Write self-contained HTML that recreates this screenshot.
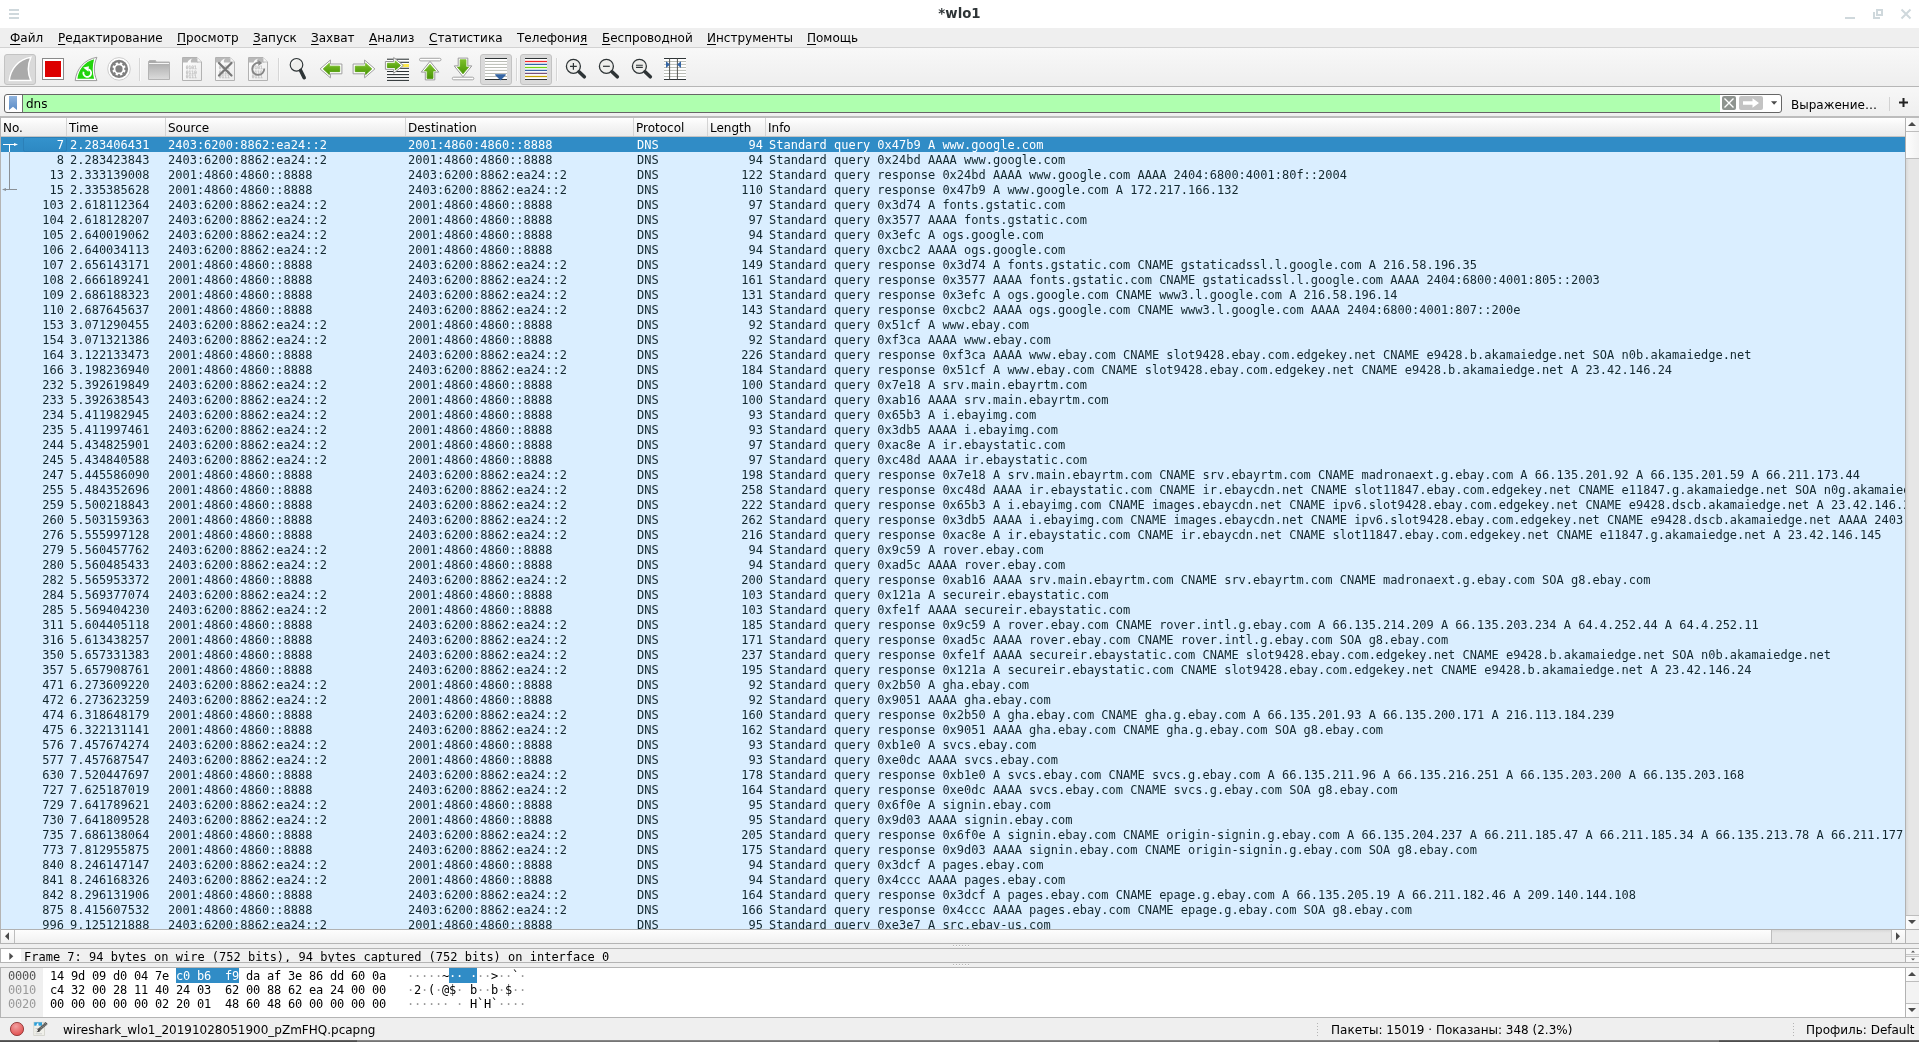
<!DOCTYPE html>
<html lang="ru"><head><meta charset="utf-8"><title>*wlo1</title>
<style>
*{box-sizing:border-box;margin:0;padding:0}
html,body{width:1919px;height:1042px;overflow:hidden;background:#efefef}
body{position:relative;will-change:transform;font-family:"DejaVu Sans","Liberation Sans",sans-serif;font-size:12px;color:#000}
.abs{position:absolute}
#title{position:absolute;left:0;top:0;width:1919px;height:28px;background:#fff}
#title .t{position:absolute;left:0;width:1919px;top:6px;text-align:center;font-weight:bold;font-size:13.33px;line-height:16px;color:#2e3436}
#menu{position:absolute;left:0;top:28px;width:1919px;height:20px;background:#efefef;border-bottom:1px solid #d2d2d2}
#menu span{position:absolute;top:2px;line-height:17px;white-space:nowrap}
#menu u{text-decoration:underline;text-underline-offset:2px;text-decoration-thickness:1px}
#toolbar{position:absolute;left:0;top:48px;width:1919px;height:39px;background:linear-gradient(#f8f8f8,#eeeeee);border-bottom:1px solid #b6b6b6}
#toolbar .pr{position:absolute;top:6px;width:32px;height:31px;border:1px solid #c3c3c3;border-radius:3px;background:#dadada}
#toolbar .sep{position:absolute;top:10px;width:1px;height:23px;background:#d6d6d6;border-right:1px solid #fafafa;box-sizing:content-box}
#toolbar svg{position:absolute;top:9px;width:24px;height:24px;overflow:visible}
#fbar{position:absolute;left:0;top:87px;width:1919px;height:29px;background:linear-gradient(#f7f7f7,#efefef)}
#finput{position:absolute;left:4px;top:7px;width:1778px;height:19px;border:1px solid #666;border-radius:3px;background:#fff;overflow:hidden}
#finput .g{position:absolute;left:17px;top:0;width:1698px;height:17px;background:#afffaf;border-left:1px solid #6e6e6e}
#finput .tx{position:absolute;left:21px;top:1px;line-height:17px;font-size:12px}
#list{position:absolute;left:0;top:116px;width:1919px;height:828px;border:1px solid #b4b4b4;border-right:0;border-top:2px solid #bcbcbc;background:#fff;overflow:hidden}
#hdr{position:absolute;left:0;top:0;width:1904px;height:19px;background:linear-gradient(#fff,#f6f6f6 40%,#ebebeb);border-bottom:1px solid #c4c4c4}
#hdr span{position:absolute;top:0;line-height:20px;height:18px;padding-left:2px;border-left:1px solid #d4d4d4}
#rows{position:absolute;left:0;top:19px;width:1904px;height:792px;overflow:hidden;background:#daeeff;font-family:"DejaVu Sans Mono","Liberation Mono",monospace;font-size:12px;color:#12272e}
.r{position:relative;height:15px;line-height:15px;white-space:pre}
.r b{font-weight:normal;position:absolute;top:1px}
.r .fc{position:absolute;left:22px;top:0;width:44px;height:15px;background:linear-gradient(#3492cc,#2d89c3);border:1px solid #2b80b8;border-radius:2px}
.sel{background:#308cc6;color:#fff}
.c0{left:0;width:63px;text-align:right}
.c1{left:69px}.c2{left:167px}.c3{left:407px}.c4{left:636px}
.c5{left:700px;width:62px;text-align:right}
.c6{left:768px}
#detail{position:absolute;left:0;top:948px;width:1919px;height:15px;border:1px solid #b4b4b4;border-right:0;background:#fff;overflow:hidden}
#hex{position:absolute;left:0;top:967px;width:1919px;height:51px;border:1px solid #b4b4b4;border-right:0;background:#fff;overflow:hidden}
#status{position:absolute;left:0;top:1018px;width:1919px;height:22px;background:#efefef}
#bottom{position:absolute;left:0;top:1040px;width:1919px;height:2px;background:linear-gradient(#6a6a6a,#444)}

.sb{position:absolute;background:#e5e5e5}
.sbtn{position:absolute;background:linear-gradient(90deg,#fdfdfd,#f1f1f1);border:0 solid #bdbdbd}
.sbh{background:linear-gradient(#fdfdfd,#f1f1f1)}
.ar{position:absolute}
.hx{position:absolute;margin-top:1px;font-family:"DejaVu Sans Mono","Liberation Mono",monospace;font-size:12px;line-height:14px;white-space:pre;color:#000}
.hx i{font-style:normal;display:inline-block;width:7px;text-align:center}
.hx .d{color:#989898}
.hx .hs,.hx .hs .d{color:#fff}
.hl{position:absolute;background:#308cc6;top:0;height:15px}
</style></head><body>
<div id="title"><svg class="abs" style="left:9px;top:9px" width="10" height="10"><path d="M0 1h10M0 5h10M0 9h10" stroke="#cfd8dc" stroke-width="2"/></svg><div class="t">*wlo1</div>
<svg class="abs" style="left:1840px;top:4px" width="76" height="20"><path d="M5 14h10" stroke="#cfd8dc" stroke-width="2" fill="none"/><path d="M37 6h5v5h-5z M34 8v6h6" stroke="#cfd8dc" stroke-width="2" fill="none"/><path d="M61.5 5.500l9 9m0-9l-9 9" stroke="#cfd8dc" stroke-width="2" fill="none"/></svg></div>
<div id="menu"><span style="left:10px"><u>Ф</u>айл</span><span style="left:58px"><u>Р</u>едактирование</span><span style="left:177px"><u>П</u>росмотр</span><span style="left:253px"><u>З</u>апуск</span><span style="left:311px"><u>З</u>ахват</span><span style="left:369px"><u>А</u>нализ</span><span style="left:429px"><u>С</u>татистика</span><span style="left:517px">Телефони<u>я</u></span><span style="left:602px"><u>Б</u>еспроводной</span><span style="left:707px"><u>И</u>нструменты</span><span style="left:807px"><u>П</u>омощь</span></div>
<div id="toolbar"><svg style="left:0;top:0;width:0;height:0"><defs>
<linearGradient id="gg" x1="0" y1="0" x2="0" y2="1"><stop offset="0" stop-color="#7cc02b"/><stop offset="1" stop-color="#4a9605"/></linearGradient>
<linearGradient id="fg" x1="0" y1="0" x2="0" y2="1"><stop offset="0" stop-color="#a6a6a6"/><stop offset="1" stop-color="#dcdcdc"/></linearGradient>
<linearGradient id="pg" x1="0" y1="0" x2="1" y2="1"><stop offset="0" stop-color="#fff"/><stop offset="1" stop-color="#ececec"/></linearGradient>
<g id="page"><path d="M2.500.5h14.500l4.500 4.500v18.500h-19z" fill="url(#pg)" stroke="#b2b2b2"/><path d="M3 1h13.500l2 4.500h-7.500c-.5-1.500 0-3 1.500-4-2.500.5-4.500 2-5 4h-4.500z" fill="#b9b9b9"/><path d="M17 .5v4.500h4.500" fill="#f6f6f6" stroke="#b2b2b2" stroke-width=".8"/><g font-family="DejaVu Sans Mono,Liberation Mono,monospace" font-size="4.600" fill="#c6c6c6" stroke="#c6c6c6" stroke-width=".3"><text x="5.700" y="12">0101</text><text x="5.700" y="16.800">0110</text><text x="5.700" y="21.400">0111</text></g></g>
<g id="mag"><circle cx="9.400" cy="9.300" r="7" fill="#eeeeec" stroke="#2e3436" stroke-width="1.300"/><path d="M15 14.800l5.300 5" stroke="#2e3436" stroke-width="3.600" stroke-linecap="round"/></g>
</defs></svg><div class="pr" style="left:4px"></div><div class="pr" style="left:480px"></div><div class="pr" style="left:520px"></div><div class="sep" style="left:139px"></div><div class="sep" style="left:278px"></div><div class="sep" style="left:516px"></div><div class="sep" style="left:556px"></div><svg style="left:8px" viewBox="0 0 24 24"><path d="M1.200 23.600C2.500 12 10 2.500 22.900.3C19.500 8 19.500 16 22.900 23.600z" fill="#aaa" stroke="#d4d4d4" stroke-width="2.400" stroke-linejoin="round"/><path d="M1.200 23.600C2.500 12 10 2.500 22.900.3C19.500 8 19.500 16 22.900 23.600z" fill="#aaa" stroke="#fff" stroke-width="1.500" stroke-linejoin="miter"/></svg><svg style="left:41px" viewBox="0 0 24 24"><rect x="1.500" y="1.500" width="21" height="21" fill="#fff" stroke="#8a8a8a"/><rect x="4" y="4" width="16" height="16" fill="#dc0000"/></svg><svg style="left:74px" viewBox="0 0 24 24"><path d="M1.200 23.600C2.500 12 10 2.500 22.900.3C19.500 8 19.500 16 22.900 23.600z" fill="#fff" stroke="#9a9a9a" stroke-width="1" stroke-linejoin="round"/><path d="M3.400 21.700C4.500 12.500 10.500 4.800 20.100 2.200C18.300 8.500 18.300 15.500 20.100 21.700z" fill="#22d40c"/><path d="M14.300 12.300A3.900 3.900 0 1 1 9.600 14.700" stroke="#fff" stroke-width="1.800" fill="none"/><path d="M9.200 10.600L14.900 9.300L14.400 14.800z" fill="#fff"/></svg><svg style="left:107px" viewBox="0 0 24 24"><circle cx="12" cy="11.900" r="11.300" fill="#fff" stroke="#c6c6c6" stroke-width=".9"/><circle cx="12" cy="11.900" r="9.100" fill="#7f7f7f"/><g transform="translate(12 11.900) rotate(22.500)"><circle r="5.300" fill="#fff"/><rect x="-1.200" y="-6.700" width="2.400" height="2.400" rx=".4" transform="rotate(0)" fill="#fff"/><rect x="-1.200" y="-6.700" width="2.400" height="2.400" rx=".4" transform="rotate(45)" fill="#fff"/><rect x="-1.200" y="-6.700" width="2.400" height="2.400" rx=".4" transform="rotate(90)" fill="#fff"/><rect x="-1.200" y="-6.700" width="2.400" height="2.400" rx=".4" transform="rotate(135)" fill="#fff"/><rect x="-1.200" y="-6.700" width="2.400" height="2.400" rx=".4" transform="rotate(180)" fill="#fff"/><rect x="-1.200" y="-6.700" width="2.400" height="2.400" rx=".4" transform="rotate(225)" fill="#fff"/><rect x="-1.200" y="-6.700" width="2.400" height="2.400" rx=".4" transform="rotate(270)" fill="#fff"/><rect x="-1.200" y="-6.700" width="2.400" height="2.400" rx=".4" transform="rotate(315)" fill="#fff"/></g><circle cx="12" cy="11.900" r="3.600" fill="#7f7f7f"/></svg><svg style="left:147px" viewBox="0 0 24 24"><path d="M2.500 3.500h6l.8 1.500h13.200v17.500h-21v-18z" fill="url(#fg)" stroke="#b4b4b4"/><path d="M2 6.500h20" stroke="#f4f4f4" stroke-width="1"/></svg><svg style="left:180px" viewBox="0 0 24 24"><use href="#page" x="0"/></svg><svg style="left:213px" viewBox="0 0 24 24"><use href="#page"/><path d="M6 6l12.500 12.500m0-12.500l-12.500 12.500" stroke="#777" stroke-width="2.200" stroke-linecap="round"/></svg><svg style="left:246px" viewBox="0 0 24 24"><use href="#page"/><path d="M12.800 6A6 6 0 1 0 18.200 11.500" stroke="#858585" stroke-width="1.800" fill="none"/><path d="M12.300 3.200l4 2.800-3.900 2.700z" fill="#858585"/></svg><svg style="left:286px" viewBox="0 0 24 24"><circle cx="10.500" cy="7.800" r="6.300" fill="#eeeeec" stroke="#2e3436" stroke-width="1.150"/><path d="M6.300 6.500a4.500 4.500 0 0 1 3.500-3.200" stroke="#fff" stroke-width="1" fill="none"/><path d="M14.600 13.500l3.600 7.200" stroke="#2e3436" stroke-width="3.600" stroke-linecap="round"/></svg><svg style="left:319px" viewBox="0 0 24 24"><g transform=""><path d="M1.100 11.900L11.400 3V7H22.900V16.800H11.400V20.800Z" fill="#fff" stroke="#9e9e9e" stroke-width="1" stroke-linejoin="round"/><path d="M4.300 11.900L10.300 6.300V9.200H20.700V14.600H10.300V17.500Z" fill="url(#gg)" stroke="url(#gg)" stroke-width="1"/></g></svg><svg style="left:352px" viewBox="0 0 24 24"><g transform="translate(24 0) scale(-1 1)"><path d="M1.100 11.900L11.400 3V7H22.900V16.800H11.400V20.800Z" fill="#fff" stroke="#9e9e9e" stroke-width="1" stroke-linejoin="round"/><path d="M4.300 11.900L10.300 6.300V9.200H20.700V14.600H10.300V17.500Z" fill="url(#gg)" stroke="url(#gg)" stroke-width="1"/></g></svg><svg style="left:385px" viewBox="0 0 24 24"><rect x="2" y="1" width="22" height="23" fill="#fff"/><rect x="17" y="7" width="7" height="3" fill="#fce94f"/><path d="M2 2.2h22" stroke="#2e3436" stroke-width="1.100"/><path d="M2 5.3h22" stroke="#2e3436" stroke-width="1.100"/><path d="M2 11.3h22" stroke="#2e3436" stroke-width="1.100"/><path d="M2 14.5h22" stroke="#2e3436" stroke-width="1.100"/><path d="M2 17.6h22" stroke="#2e3436" stroke-width="1.100"/><path d="M2 20.5h22" stroke="#2e3436" stroke-width="1.100"/><path d="M2 23.4h22" stroke="#2e3436" stroke-width="1.100"/><path d="M18.300 8.400L8.700.5v4H.4v7.800h8.300v4z" fill="#fff" stroke="#969696" stroke-width="1" stroke-linejoin="round"/><path d="M15.500 8.400L10.300 4v2.300H2.400v4.200h7.900v2.300z" fill="url(#gg)" stroke="url(#gg)" stroke-width="1"/></svg><svg style="left:418px" viewBox="0 0 24 24"><rect x="1.500" y="1.300" width="21.500" height="2.600" rx="1.300" fill="#fff" stroke="#9a9a9a" stroke-width=".9"/><path d="M12 4.300l8.800 10.800h-4v7.800H7.300v-7.800h-4z" fill="#fff" stroke="#9a9a9a" stroke-width="1" stroke-linejoin="round"/><path d="M12 7.300l5.600 6.600h-2.600v7.500H9.100v-7.500H6.400z" fill="url(#gg)" stroke="url(#gg)" stroke-width=".8"/></svg><svg style="left:451px" viewBox="0 0 24 24"><rect x="1.300" y="20.200" width="21.500" height="2.600" rx="1.300" fill="#fff" stroke="#9a9a9a" stroke-width=".9"/><path d="M12 19.800L3.200 8.900h4V1.100h9.600v7.800h4z" fill="#fff" stroke="#9a9a9a" stroke-width="1" stroke-linejoin="round"/><path d="M12 16.800L6.400 10.100h2.700V2.700h5.900v7.400h2.600z" fill="url(#gg)" stroke="url(#gg)" stroke-width=".8"/></svg><svg style="left:484px" viewBox="0 0 24 24"><rect x="1" y="1" width="22" height="22" fill="#fff"/><path d="M1 4.5h22" stroke="#babdb6" stroke-width="1"/><path d="M1 7.4h22" stroke="#babdb6" stroke-width="1"/><path d="M1 10.5h22" stroke="#babdb6" stroke-width="1"/><path d="M1 13.4h22" stroke="#babdb6" stroke-width="1"/><path d="M1 16.5h22" stroke="#babdb6" stroke-width="1"/><path d="M1 19.5h22" stroke="#babdb6" stroke-width="1"/><path d="M1 1.500h22M1 22.500h22" stroke="#2e3436" stroke-width="1.200"/><path d="M11.700 17.800h9.600l-4.800 4.900z" fill="#3465a4" stroke="#3465a4" stroke-width="1.200" stroke-linejoin="round"/></svg><svg style="left:524px" viewBox="0 0 24 24"><rect x="1" y="1" width="22" height="22" fill="#fff"/><path d="M1 4.5h22" stroke="#ef2929" stroke-width="1.300"/><path d="M1 7.4h22" stroke="#3465a4" stroke-width="1.300"/><path d="M1 10.5h22" stroke="#73d216" stroke-width="1.300"/><path d="M1 13.4h22" stroke="#3465a4" stroke-width="1.300"/><path d="M1 16.4h22" stroke="#75507b" stroke-width="1.300"/><path d="M1 19.5h22" stroke="#c4a000" stroke-width="1.300"/><path d="M1 1.500h22M1 22.500h22" stroke="#2e3436" stroke-width="1.200"/></svg><svg style="left:564px" viewBox="0 0 24 24"><use href="#mag"/><path d="M6 9.300h6.800M9.400 5.900v6.800" stroke="#2e3436" stroke-width="1.200"/></svg><svg style="left:597px" viewBox="0 0 24 24"><use href="#mag"/><path d="M6 9.300h6.800" stroke="#2e3436" stroke-width="1.200"/></svg><svg style="left:630px" viewBox="0 0 24 24"><use href="#mag"/><path d="M6 8.200h6.800M6 10.400h6.800" stroke="#2e3436" stroke-width="1.100"/></svg><svg style="left:663px" viewBox="0 0 24 24"><rect x="1" y="1" width="22" height="22" fill="#fff"/><path d="M1 4.5h22" stroke="#babdb6" stroke-width="1"/><path d="M1 7.4h22" stroke="#babdb6" stroke-width="1"/><path d="M1 10.5h22" stroke="#babdb6" stroke-width="1"/><path d="M1 13.4h22" stroke="#babdb6" stroke-width="1"/><path d="M1 16.5h22" stroke="#babdb6" stroke-width="1"/><path d="M1 19.5h22" stroke="#babdb6" stroke-width="1"/><path d="M1 1.500h22M1 22.500h22" stroke="#2e3436" stroke-width="1.200"/><path d="M6.600 1.500v21M14.400 1.500v21" stroke="#555753" stroke-width="1"/><path d="M3 4.200l4 3.400-4 3.400zM18 4.200l-4 3.400 4 3.400z" fill="#3465a4"/></svg></div>
<div id="fbar"><div id="finput"><div class="g"></div>
<svg class="abs" style="left:4px;top:1px" width="9" height="14"><defs><linearGradient id="bk" x1="0" y1="0" x2="0" y2="1"><stop offset="0" stop-color="#8fb3de"/><stop offset="1" stop-color="#5b8cc6"/></linearGradient></defs><path d="M0 0h8v14l-4-3.300-4 3.300z" fill="url(#bk)"/></svg>
<div class="tx">dns</div>
<svg class="abs" style="left:1717px;top:1px" width="60" height="16"><rect x="0" y="0" width="14" height="14" rx="2" fill="#8e938f"/><path d="M2.500 2.500l9 9m0-9l-9 9" stroke="#fff" stroke-width="1.400"/><rect x="17" y="0" width="24" height="14" rx="2" fill="#c3c3c3"/><path d="M21 5.200h9.500V2.300l6.500 4.700-6.500 4.700V8.800H21z" fill="#fff"/><path d="M49 5.300h6.200l-3.100 3.400z" fill="#4a4a4a"/></svg>
</div>
<div class="abs" style="left:1791px;top:10px;line-height:17px">Выражение…</div>
<div class="abs" style="left:1889px;top:10px;width:1px;height:14px;background:#d2d2d2"></div>
<svg class="abs" style="left:1899px;top:11px" width="10" height="10"><path d="M0 4.500h9M4.500 0v9" stroke="#222" stroke-width="2"/></svg>
</div>
<div id="list"><div id="hdr"><span style="left:0px;border-left:0;padding-left:2px">No.</span><span style="left:65px">Time</span><span style="left:164px">Source</span><span style="left:404px">Destination</span><span style="left:632px">Protocol</span><span style="left:706px">Length</span><span style="left:764px">Info</span></div><div id="rows">
<div class="r sel"><i class="fc"></i><b class="c0">7</b><b class="c1">2.283406431</b><b class="c2">2403:6200:8862:ea24::2</b><b class="c3">2001:4860:4860::8888</b><b class="c4">DNS</b><b class="c5">94</b><b class="c6">Standard query 0x47b9 A www.google.com</b></div>
<div class="r"><b class="c0">8</b><b class="c1">2.283423843</b><b class="c2">2403:6200:8862:ea24::2</b><b class="c3">2001:4860:4860::8888</b><b class="c4">DNS</b><b class="c5">94</b><b class="c6">Standard query 0x24bd AAAA www.google.com</b></div>
<div class="r"><b class="c0">13</b><b class="c1">2.333139008</b><b class="c2">2001:4860:4860::8888</b><b class="c3">2403:6200:8862:ea24::2</b><b class="c4">DNS</b><b class="c5">122</b><b class="c6">Standard query response 0x24bd AAAA www.google.com AAAA 2404:6800:4001:80f::2004</b></div>
<div class="r"><b class="c0">15</b><b class="c1">2.335385628</b><b class="c2">2001:4860:4860::8888</b><b class="c3">2403:6200:8862:ea24::2</b><b class="c4">DNS</b><b class="c5">110</b><b class="c6">Standard query response 0x47b9 A www.google.com A 172.217.166.132</b></div>
<div class="r"><b class="c0">103</b><b class="c1">2.618112364</b><b class="c2">2403:6200:8862:ea24::2</b><b class="c3">2001:4860:4860::8888</b><b class="c4">DNS</b><b class="c5">97</b><b class="c6">Standard query 0x3d74 A fonts.gstatic.com</b></div>
<div class="r"><b class="c0">104</b><b class="c1">2.618128207</b><b class="c2">2403:6200:8862:ea24::2</b><b class="c3">2001:4860:4860::8888</b><b class="c4">DNS</b><b class="c5">97</b><b class="c6">Standard query 0x3577 AAAA fonts.gstatic.com</b></div>
<div class="r"><b class="c0">105</b><b class="c1">2.640019062</b><b class="c2">2403:6200:8862:ea24::2</b><b class="c3">2001:4860:4860::8888</b><b class="c4">DNS</b><b class="c5">94</b><b class="c6">Standard query 0x3efc A ogs.google.com</b></div>
<div class="r"><b class="c0">106</b><b class="c1">2.640034113</b><b class="c2">2403:6200:8862:ea24::2</b><b class="c3">2001:4860:4860::8888</b><b class="c4">DNS</b><b class="c5">94</b><b class="c6">Standard query 0xcbc2 AAAA ogs.google.com</b></div>
<div class="r"><b class="c0">107</b><b class="c1">2.656143171</b><b class="c2">2001:4860:4860::8888</b><b class="c3">2403:6200:8862:ea24::2</b><b class="c4">DNS</b><b class="c5">149</b><b class="c6">Standard query response 0x3d74 A fonts.gstatic.com CNAME gstaticadssl.l.google.com A 216.58.196.35</b></div>
<div class="r"><b class="c0">108</b><b class="c1">2.666189241</b><b class="c2">2001:4860:4860::8888</b><b class="c3">2403:6200:8862:ea24::2</b><b class="c4">DNS</b><b class="c5">161</b><b class="c6">Standard query response 0x3577 AAAA fonts.gstatic.com CNAME gstaticadssl.l.google.com AAAA 2404:6800:4001:805::2003</b></div>
<div class="r"><b class="c0">109</b><b class="c1">2.686188323</b><b class="c2">2001:4860:4860::8888</b><b class="c3">2403:6200:8862:ea24::2</b><b class="c4">DNS</b><b class="c5">131</b><b class="c6">Standard query response 0x3efc A ogs.google.com CNAME www3.l.google.com A 216.58.196.14</b></div>
<div class="r"><b class="c0">110</b><b class="c1">2.687645637</b><b class="c2">2001:4860:4860::8888</b><b class="c3">2403:6200:8862:ea24::2</b><b class="c4">DNS</b><b class="c5">143</b><b class="c6">Standard query response 0xcbc2 AAAA ogs.google.com CNAME www3.l.google.com AAAA 2404:6800:4001:807::200e</b></div>
<div class="r"><b class="c0">153</b><b class="c1">3.071290455</b><b class="c2">2403:6200:8862:ea24::2</b><b class="c3">2001:4860:4860::8888</b><b class="c4">DNS</b><b class="c5">92</b><b class="c6">Standard query 0x51cf A www.ebay.com</b></div>
<div class="r"><b class="c0">154</b><b class="c1">3.071321386</b><b class="c2">2403:6200:8862:ea24::2</b><b class="c3">2001:4860:4860::8888</b><b class="c4">DNS</b><b class="c5">92</b><b class="c6">Standard query 0xf3ca AAAA www.ebay.com</b></div>
<div class="r"><b class="c0">164</b><b class="c1">3.122133473</b><b class="c2">2001:4860:4860::8888</b><b class="c3">2403:6200:8862:ea24::2</b><b class="c4">DNS</b><b class="c5">226</b><b class="c6">Standard query response 0xf3ca AAAA www.ebay.com CNAME slot9428.ebay.com.edgekey.net CNAME e9428.b.akamaiedge.net SOA n0b.akamaiedge.net</b></div>
<div class="r"><b class="c0">166</b><b class="c1">3.198236940</b><b class="c2">2001:4860:4860::8888</b><b class="c3">2403:6200:8862:ea24::2</b><b class="c4">DNS</b><b class="c5">184</b><b class="c6">Standard query response 0x51cf A www.ebay.com CNAME slot9428.ebay.com.edgekey.net CNAME e9428.b.akamaiedge.net A 23.42.146.24</b></div>
<div class="r"><b class="c0">232</b><b class="c1">5.392619849</b><b class="c2">2403:6200:8862:ea24::2</b><b class="c3">2001:4860:4860::8888</b><b class="c4">DNS</b><b class="c5">100</b><b class="c6">Standard query 0x7e18 A srv.main.ebayrtm.com</b></div>
<div class="r"><b class="c0">233</b><b class="c1">5.392638543</b><b class="c2">2403:6200:8862:ea24::2</b><b class="c3">2001:4860:4860::8888</b><b class="c4">DNS</b><b class="c5">100</b><b class="c6">Standard query 0xab16 AAAA srv.main.ebayrtm.com</b></div>
<div class="r"><b class="c0">234</b><b class="c1">5.411982945</b><b class="c2">2403:6200:8862:ea24::2</b><b class="c3">2001:4860:4860::8888</b><b class="c4">DNS</b><b class="c5">93</b><b class="c6">Standard query 0x65b3 A i.ebayimg.com</b></div>
<div class="r"><b class="c0">235</b><b class="c1">5.411997461</b><b class="c2">2403:6200:8862:ea24::2</b><b class="c3">2001:4860:4860::8888</b><b class="c4">DNS</b><b class="c5">93</b><b class="c6">Standard query 0x3db5 AAAA i.ebayimg.com</b></div>
<div class="r"><b class="c0">244</b><b class="c1">5.434825901</b><b class="c2">2403:6200:8862:ea24::2</b><b class="c3">2001:4860:4860::8888</b><b class="c4">DNS</b><b class="c5">97</b><b class="c6">Standard query 0xac8e A ir.ebaystatic.com</b></div>
<div class="r"><b class="c0">245</b><b class="c1">5.434840588</b><b class="c2">2403:6200:8862:ea24::2</b><b class="c3">2001:4860:4860::8888</b><b class="c4">DNS</b><b class="c5">97</b><b class="c6">Standard query 0xc48d AAAA ir.ebaystatic.com</b></div>
<div class="r"><b class="c0">247</b><b class="c1">5.445586090</b><b class="c2">2001:4860:4860::8888</b><b class="c3">2403:6200:8862:ea24::2</b><b class="c4">DNS</b><b class="c5">198</b><b class="c6">Standard query response 0x7e18 A srv.main.ebayrtm.com CNAME srv.ebayrtm.com CNAME madronaext.g.ebay.com A 66.135.201.92 A 66.135.201.59 A 66.211.173.44</b></div>
<div class="r"><b class="c0">255</b><b class="c1">5.484352696</b><b class="c2">2001:4860:4860::8888</b><b class="c3">2403:6200:8862:ea24::2</b><b class="c4">DNS</b><b class="c5">258</b><b class="c6">Standard query response 0xc48d AAAA ir.ebaystatic.com CNAME ir.ebaycdn.net CNAME slot11847.ebay.com.edgekey.net CNAME e11847.g.akamaiedge.net SOA n0g.akamaiedge.net</b></div>
<div class="r"><b class="c0">259</b><b class="c1">5.500218843</b><b class="c2">2001:4860:4860::8888</b><b class="c3">2403:6200:8862:ea24::2</b><b class="c4">DNS</b><b class="c5">222</b><b class="c6">Standard query response 0x65b3 A i.ebayimg.com CNAME images.ebaycdn.net CNAME ipv6.slot9428.ebay.com.edgekey.net CNAME e9428.dscb.akamaiedge.net A 23.42.146.24</b></div>
<div class="r"><b class="c0">260</b><b class="c1">5.503159363</b><b class="c2">2001:4860:4860::8888</b><b class="c3">2403:6200:8862:ea24::2</b><b class="c4">DNS</b><b class="c5">262</b><b class="c6">Standard query response 0x3db5 AAAA i.ebayimg.com CNAME images.ebaycdn.net CNAME ipv6.slot9428.ebay.com.edgekey.net CNAME e9428.dscb.akamaiedge.net AAAA 2403:6200:ffff:ffa1::3ace:dcb1</b></div>
<div class="r"><b class="c0">276</b><b class="c1">5.555997128</b><b class="c2">2001:4860:4860::8888</b><b class="c3">2403:6200:8862:ea24::2</b><b class="c4">DNS</b><b class="c5">216</b><b class="c6">Standard query response 0xac8e A ir.ebaystatic.com CNAME ir.ebaycdn.net CNAME slot11847.ebay.com.edgekey.net CNAME e11847.g.akamaiedge.net A 23.42.146.145</b></div>
<div class="r"><b class="c0">279</b><b class="c1">5.560457762</b><b class="c2">2403:6200:8862:ea24::2</b><b class="c3">2001:4860:4860::8888</b><b class="c4">DNS</b><b class="c5">94</b><b class="c6">Standard query 0x9c59 A rover.ebay.com</b></div>
<div class="r"><b class="c0">280</b><b class="c1">5.560485433</b><b class="c2">2403:6200:8862:ea24::2</b><b class="c3">2001:4860:4860::8888</b><b class="c4">DNS</b><b class="c5">94</b><b class="c6">Standard query 0xad5c AAAA rover.ebay.com</b></div>
<div class="r"><b class="c0">282</b><b class="c1">5.565953372</b><b class="c2">2001:4860:4860::8888</b><b class="c3">2403:6200:8862:ea24::2</b><b class="c4">DNS</b><b class="c5">200</b><b class="c6">Standard query response 0xab16 AAAA srv.main.ebayrtm.com CNAME srv.ebayrtm.com CNAME madronaext.g.ebay.com SOA g8.ebay.com</b></div>
<div class="r"><b class="c0">284</b><b class="c1">5.569377074</b><b class="c2">2403:6200:8862:ea24::2</b><b class="c3">2001:4860:4860::8888</b><b class="c4">DNS</b><b class="c5">103</b><b class="c6">Standard query 0x121a A secureir.ebaystatic.com</b></div>
<div class="r"><b class="c0">285</b><b class="c1">5.569404230</b><b class="c2">2403:6200:8862:ea24::2</b><b class="c3">2001:4860:4860::8888</b><b class="c4">DNS</b><b class="c5">103</b><b class="c6">Standard query 0xfe1f AAAA secureir.ebaystatic.com</b></div>
<div class="r"><b class="c0">311</b><b class="c1">5.604405118</b><b class="c2">2001:4860:4860::8888</b><b class="c3">2403:6200:8862:ea24::2</b><b class="c4">DNS</b><b class="c5">185</b><b class="c6">Standard query response 0x9c59 A rover.ebay.com CNAME rover.intl.g.ebay.com A 66.135.214.209 A 66.135.203.234 A 64.4.252.44 A 64.4.252.11</b></div>
<div class="r"><b class="c0">316</b><b class="c1">5.613438257</b><b class="c2">2001:4860:4860::8888</b><b class="c3">2403:6200:8862:ea24::2</b><b class="c4">DNS</b><b class="c5">171</b><b class="c6">Standard query response 0xad5c AAAA rover.ebay.com CNAME rover.intl.g.ebay.com SOA g8.ebay.com</b></div>
<div class="r"><b class="c0">350</b><b class="c1">5.657331383</b><b class="c2">2001:4860:4860::8888</b><b class="c3">2403:6200:8862:ea24::2</b><b class="c4">DNS</b><b class="c5">237</b><b class="c6">Standard query response 0xfe1f AAAA secureir.ebaystatic.com CNAME slot9428.ebay.com.edgekey.net CNAME e9428.b.akamaiedge.net SOA n0b.akamaiedge.net</b></div>
<div class="r"><b class="c0">357</b><b class="c1">5.657908761</b><b class="c2">2001:4860:4860::8888</b><b class="c3">2403:6200:8862:ea24::2</b><b class="c4">DNS</b><b class="c5">195</b><b class="c6">Standard query response 0x121a A secureir.ebaystatic.com CNAME slot9428.ebay.com.edgekey.net CNAME e9428.b.akamaiedge.net A 23.42.146.24</b></div>
<div class="r"><b class="c0">471</b><b class="c1">6.273609220</b><b class="c2">2403:6200:8862:ea24::2</b><b class="c3">2001:4860:4860::8888</b><b class="c4">DNS</b><b class="c5">92</b><b class="c6">Standard query 0x2b50 A gha.ebay.com</b></div>
<div class="r"><b class="c0">472</b><b class="c1">6.273623259</b><b class="c2">2403:6200:8862:ea24::2</b><b class="c3">2001:4860:4860::8888</b><b class="c4">DNS</b><b class="c5">92</b><b class="c6">Standard query 0x9051 AAAA gha.ebay.com</b></div>
<div class="r"><b class="c0">474</b><b class="c1">6.318648179</b><b class="c2">2001:4860:4860::8888</b><b class="c3">2403:6200:8862:ea24::2</b><b class="c4">DNS</b><b class="c5">160</b><b class="c6">Standard query response 0x2b50 A gha.ebay.com CNAME gha.g.ebay.com A 66.135.201.93 A 66.135.200.171 A 216.113.184.239</b></div>
<div class="r"><b class="c0">475</b><b class="c1">6.322131141</b><b class="c2">2001:4860:4860::8888</b><b class="c3">2403:6200:8862:ea24::2</b><b class="c4">DNS</b><b class="c5">162</b><b class="c6">Standard query response 0x9051 AAAA gha.ebay.com CNAME gha.g.ebay.com SOA g8.ebay.com</b></div>
<div class="r"><b class="c0">576</b><b class="c1">7.457674274</b><b class="c2">2403:6200:8862:ea24::2</b><b class="c3">2001:4860:4860::8888</b><b class="c4">DNS</b><b class="c5">93</b><b class="c6">Standard query 0xb1e0 A svcs.ebay.com</b></div>
<div class="r"><b class="c0">577</b><b class="c1">7.457687547</b><b class="c2">2403:6200:8862:ea24::2</b><b class="c3">2001:4860:4860::8888</b><b class="c4">DNS</b><b class="c5">93</b><b class="c6">Standard query 0xe0dc AAAA svcs.ebay.com</b></div>
<div class="r"><b class="c0">630</b><b class="c1">7.520447697</b><b class="c2">2001:4860:4860::8888</b><b class="c3">2403:6200:8862:ea24::2</b><b class="c4">DNS</b><b class="c5">178</b><b class="c6">Standard query response 0xb1e0 A svcs.ebay.com CNAME svcs.g.ebay.com A 66.135.211.96 A 66.135.216.251 A 66.135.203.200 A 66.135.203.168</b></div>
<div class="r"><b class="c0">727</b><b class="c1">7.625187019</b><b class="c2">2001:4860:4860::8888</b><b class="c3">2403:6200:8862:ea24::2</b><b class="c4">DNS</b><b class="c5">164</b><b class="c6">Standard query response 0xe0dc AAAA svcs.ebay.com CNAME svcs.g.ebay.com SOA g8.ebay.com</b></div>
<div class="r"><b class="c0">729</b><b class="c1">7.641789621</b><b class="c2">2403:6200:8862:ea24::2</b><b class="c3">2001:4860:4860::8888</b><b class="c4">DNS</b><b class="c5">95</b><b class="c6">Standard query 0x6f0e A signin.ebay.com</b></div>
<div class="r"><b class="c0">730</b><b class="c1">7.641809528</b><b class="c2">2403:6200:8862:ea24::2</b><b class="c3">2001:4860:4860::8888</b><b class="c4">DNS</b><b class="c5">95</b><b class="c6">Standard query 0x9d03 AAAA signin.ebay.com</b></div>
<div class="r"><b class="c0">735</b><b class="c1">7.686138064</b><b class="c2">2001:4860:4860::8888</b><b class="c3">2403:6200:8862:ea24::2</b><b class="c4">DNS</b><b class="c5">205</b><b class="c6">Standard query response 0x6f0e A signin.ebay.com CNAME origin-signin.g.ebay.com A 66.135.204.237 A 66.211.185.47 A 66.211.185.34 A 66.135.213.78 A 66.211.177.13</b></div>
<div class="r"><b class="c0">773</b><b class="c1">7.812955875</b><b class="c2">2001:4860:4860::8888</b><b class="c3">2403:6200:8862:ea24::2</b><b class="c4">DNS</b><b class="c5">175</b><b class="c6">Standard query response 0x9d03 AAAA signin.ebay.com CNAME origin-signin.g.ebay.com SOA g8.ebay.com</b></div>
<div class="r"><b class="c0">840</b><b class="c1">8.246147147</b><b class="c2">2403:6200:8862:ea24::2</b><b class="c3">2001:4860:4860::8888</b><b class="c4">DNS</b><b class="c5">94</b><b class="c6">Standard query 0x3dcf A pages.ebay.com</b></div>
<div class="r"><b class="c0">841</b><b class="c1">8.246168326</b><b class="c2">2403:6200:8862:ea24::2</b><b class="c3">2001:4860:4860::8888</b><b class="c4">DNS</b><b class="c5">94</b><b class="c6">Standard query 0x4ccc AAAA pages.ebay.com</b></div>
<div class="r"><b class="c0">842</b><b class="c1">8.296131906</b><b class="c2">2001:4860:4860::8888</b><b class="c3">2403:6200:8862:ea24::2</b><b class="c4">DNS</b><b class="c5">164</b><b class="c6">Standard query response 0x3dcf A pages.ebay.com CNAME epage.g.ebay.com A 66.135.205.19 A 66.211.182.46 A 209.140.144.108</b></div>
<div class="r"><b class="c0">875</b><b class="c1">8.415607532</b><b class="c2">2001:4860:4860::8888</b><b class="c3">2403:6200:8862:ea24::2</b><b class="c4">DNS</b><b class="c5">166</b><b class="c6">Standard query response 0x4ccc AAAA pages.ebay.com CNAME epage.g.ebay.com SOA g8.ebay.com</b></div>
<div class="r"><b class="c0">996</b><b class="c1">9.125121888</b><b class="c2">2403:6200:8862:ea24::2</b><b class="c3">2001:4860:4860::8888</b><b class="c4">DNS</b><b class="c5">95</b><b class="c6">Standard query 0xe3e7 A src.ebay-us.com</b></div>
</div><svg class="abs" style="left:-1px;top:19px" width="22" height="60"><path d="M3 7.500h11M9.500 7.500v8" stroke="#fff" stroke-width="1" fill="none"/><path d="M14 6l4 1.500-4 1.500z" fill="#fff"/><path d="M9.500 15v37.500M6 52.500h11" stroke="#8a9096" stroke-width="1" fill="none"/><path d="M6 51l-4 1.500 4 1.500z" fill="#8a9096"/></svg>
<div class="sb" style="left:1904px;top:0;width:15px;height:811px;border-left:1px solid #b2b2b2;background:linear-gradient(90deg,#d8d8d8,#e6e6e6 3px)"></div>
<div class="sbtn" style="left:1905px;top:0;width:14px;height:14px;border-bottom-width:1px"><svg class="ar" style="left:1px;top:3px" width="10" height="6"><path d="M1 5l4-4 4 4z" fill="#4a4a4a"/></svg></div>
<div class="sbtn" style="left:1905px;top:14px;width:14px;height:27px;border-bottom-width:1px"></div>
<div class="sbtn" style="left:1905px;top:797px;width:14px;height:14px;border-top-width:1px"><svg class="ar" style="left:1px;top:3px" width="10" height="6"><path d="M1 1l4 4 4-4z" fill="#4a4a4a"/></svg></div>
<div class="sb" style="left:0;top:811px;width:1904px;height:14px;border-top:1px solid #b2b2b2;background:linear-gradient(#d8d8d8,#e6e6e6 3px)"></div>
<div class="sbtn sbh" style="left:0;top:812px;width:14px;height:13px;border-right-width:1px"><svg class="ar" style="left:3px;top:2px" width="6" height="9"><path d="M5 .3l-4 4 4 4z" fill="#4a4a4a"/></svg></div>
<div class="sbtn sbh" style="left:14px;top:812px;width:1757px;height:13px;border-right-width:1px"></div>
<div class="sbtn sbh" style="left:1890px;top:812px;width:14px;height:13px;border-left-width:1px"><svg class="ar" style="left:3px;top:2px" width="6" height="9"><path d="M1 .3l4 4-4 4z" fill="#4a4a4a"/></svg></div>
<div class="abs" style="left:1904px;top:811px;width:15px;height:14px;background:#efefef;border-left:1px solid #b2b2b2;border-top:1px solid #b2b2b2"></div>
</div>
<div class="abs" style="left:953px;top:945px;width:16px;height:1px;background:repeating-linear-gradient(90deg,#b4b4b4 0 1px,transparent 1px 3px)"></div><div class="abs" style="left:953px;top:946px;width:16px;height:1px;background:repeating-linear-gradient(90deg,#fafafa 0 1px,transparent 1px 3px)"></div>
<div class="abs" style="left:953px;top:964px;width:16px;height:1px;background:repeating-linear-gradient(90deg,#b4b4b4 0 1px,transparent 1px 3px)"></div><div class="abs" style="left:953px;top:965px;width:16px;height:1px;background:repeating-linear-gradient(90deg,#fafafa 0 1px,transparent 1px 3px)"></div>
<div id="detail"><div class="abs" style="left:20px;top:0;width:1884px;height:15px;background:#f0f0f0"></div><svg class="abs" style="left:8px;top:3px" width="6" height="9"><path d="M.3 .7l4 3.600-4 3.600z" fill="#4d4d4d"/></svg><div class="abs" style="left:23px;top:1px;font-family:'DejaVu Sans Mono','Liberation Mono',monospace;font-size:12px;line-height:15px;white-space:pre;color:#000">Frame 7: 94 bytes on wire (752 bits), 94 bytes captured (752 bits) on interface 0</div>
<div class="abs" style="left:1904px;top:0;width:15px;height:13px;background:#f8f8f8;border-left:1px solid #b2b2b2"><svg class="abs" style="left:0;top:0" width="14" height="13"><path d="M5 3.600l2-2 2 2zM5 9.400l2 2 2-2z" fill="#555"/><path d="M0 5.500h14M0 7.500h14" stroke="#c4c4c4"/><path d="M0 6.500h14" stroke="#efefef"/></svg></div></div>
<div id="hex"><div class="abs" style="left:0;top:0;width:42px;height:49px;background:#efefef"></div><div class="hl" style="left:175px;width:63px"></div><div class="hl" style="left:448px;width:28px"></div><div class="hx" style="left:7px;top:0px;color:#555"><i>0</i><i>0</i><i>0</i><i>0</i></div><div class="hx" style="left:49px;top:0px"><i>1</i><i>4</i><i> </i><i>9</i><i>d</i><i> </i><i>0</i><i>9</i><i> </i><i>d</i><i>0</i><i> </i><i>0</i><i>4</i><i> </i><i>7</i><i>e</i><i> </i><span class="hs"><i>c</i><i>0</i><i> </i><i>b</i><i>6</i><i> </i><i> </i><i>f</i><i>9</i></span><i> </i><i>d</i><i>a</i><i> </i><i>a</i><i>f</i><i> </i><i>3</i><i>e</i><i> </i><i>8</i><i>6</i><i> </i><i>d</i><i>d</i><i> </i><i>6</i><i>0</i><i> </i><i>0</i><i>a</i></div><div class="hx" style="left:406px;top:0px"><i class="d">·</i><i class="d">·</i><i class="d">·</i><i class="d">·</i><i class="d">·</i><i>~</i><span class="hs"><i class="d">·</i><i class="d">·</i><i> </i><i class="d">·</i></span><i class="d">·</i><i class="d">·</i><i>></i><i class="d">·</i><i class="d">·</i><i>`</i><i class="d">·</i></div><div class="hx" style="left:7px;top:14px;color:#9a9a9a"><i>0</i><i>0</i><i>1</i><i>0</i></div><div class="hx" style="left:49px;top:14px"><i>c</i><i>4</i><i> </i><i>3</i><i>2</i><i> </i><i>0</i><i>0</i><i> </i><i>2</i><i>8</i><i> </i><i>1</i><i>1</i><i> </i><i>4</i><i>0</i><i> </i><i>2</i><i>4</i><i> </i><i>0</i><i>3</i><i> </i><i> </i><i>6</i><i>2</i><i> </i><i>0</i><i>0</i><i> </i><i>8</i><i>8</i><i> </i><i>6</i><i>2</i><i> </i><i>e</i><i>a</i><i> </i><i>2</i><i>4</i><i> </i><i>0</i><i>0</i><i> </i><i>0</i><i>0</i></div><div class="hx" style="left:406px;top:14px"><i class="d">·</i><i>2</i><i class="d">·</i><i>(</i><i class="d">·</i><i>@</i><i>$</i><i class="d">·</i><i> </i><i>b</i><i class="d">·</i><i class="d">·</i><i>b</i><i class="d">·</i><i>$</i><i class="d">·</i><i class="d">·</i></div><div class="hx" style="left:7px;top:28px;color:#9a9a9a"><i>0</i><i>0</i><i>2</i><i>0</i></div><div class="hx" style="left:49px;top:28px"><i>0</i><i>0</i><i> </i><i>0</i><i>0</i><i> </i><i>0</i><i>0</i><i> </i><i>0</i><i>0</i><i> </i><i>0</i><i>0</i><i> </i><i>0</i><i>2</i><i> </i><i>2</i><i>0</i><i> </i><i>0</i><i>1</i><i> </i><i> </i><i>4</i><i>8</i><i> </i><i>6</i><i>0</i><i> </i><i>4</i><i>8</i><i> </i><i>6</i><i>0</i><i> </i><i>0</i><i>0</i><i> </i><i>0</i><i>0</i><i> </i><i>0</i><i>0</i><i> </i><i>0</i><i>0</i></div><div class="hx" style="left:406px;top:28px"><i class="d">·</i><i class="d">·</i><i class="d">·</i><i class="d">·</i><i class="d">·</i><i class="d">·</i><i> </i><i class="d">·</i><i> </i><i>H</i><i>`</i><i>H</i><i>`</i><i class="d">·</i><i class="d">·</i><i class="d">·</i><i class="d">·</i></div><div class="sb" style="left:1904px;top:0;width:15px;height:49px;border-left:1px solid #b2b2b2;background:#f3f3f3"></div>
<div class="sbtn" style="left:1905px;top:0;width:14px;height:14px;border-bottom-width:1px"><svg class="ar" style="left:1px;top:3px" width="10" height="6"><path d="M1 5l4-4 4 4z" fill="#4a4a4a"/></svg></div>
<div class="sbtn" style="left:1905px;top:35px;width:14px;height:14px;border-top-width:1px"><svg class="ar" style="left:1px;top:3px" width="10" height="6"><path d="M1 1l4 4 4-4z" fill="#4a4a4a"/></svg></div></div>
<div id="status"><svg class="abs" style="left:9px;top:3px" width="16" height="16"><defs><radialGradient id="rd" cx=".42" cy=".3" r=".75"><stop offset="0" stop-color="#f2a0a0"/><stop offset="1" stop-color="#e04a4a"/></radialGradient></defs><circle cx="8" cy="8" r="6.600" fill="url(#rd)" stroke="#8e3838" stroke-width=".9"/></svg>
<svg class="abs" style="left:32px;top:3px" width="17" height="16"><rect x="1.800" y="1.300" width="10.700" height="13.200" fill="#f0f0ea" stroke="#d0d0c8" stroke-width=".8"/><rect x="2.200" y="1.300" width="7.800" height="3.400" fill="#2d9fd8"/><path d="M4.300 4.700c.3-1.500 1-2.500 2-3-.2 1 0 2 .6 3z" fill="#fff"/><path d="M3.500 7.500h5M3.500 10.200h3M3.500 12.800h6.500" stroke="#cfcfcf" stroke-width="1"/><path d="M14.600 2L6.200 9.600" stroke="#3c3c3c" stroke-width="3" stroke-dasharray=".9 .25"/><path d="M6.800 9l-2.200 2.300 2.900-.9z" fill="#222"/></svg>
<div class="abs" style="left:63px;top:4px;line-height:17px;white-space:nowrap">wireshark_wlo1_20191028051900_pZmFHQ.pcapng</div>
<div class="abs" style="left:1317px;top:5px;width:1px;height:13px;background:repeating-linear-gradient(#b4b4b4 0 1px,transparent 1px 3px)"></div>
<div class="abs" style="left:1331px;top:4px;line-height:17px;white-space:nowrap">Пакеты: 15019 · Показаны: 348 (2.3%)</div>
<div class="abs" style="left:1793px;top:5px;width:1px;height:13px;background:repeating-linear-gradient(#b4b4b4 0 1px,transparent 1px 3px)"></div>
<div class="abs" style="left:1806px;top:4px;line-height:17px;white-space:nowrap">Профиль: Default</div>
</div>
<div id="bottom"><div class="abs" style="left:357px;top:0;width:1362px;height:2px;background:linear-gradient(#8e8e8e,#6e6e6e)"></div></div>
</body></html>
